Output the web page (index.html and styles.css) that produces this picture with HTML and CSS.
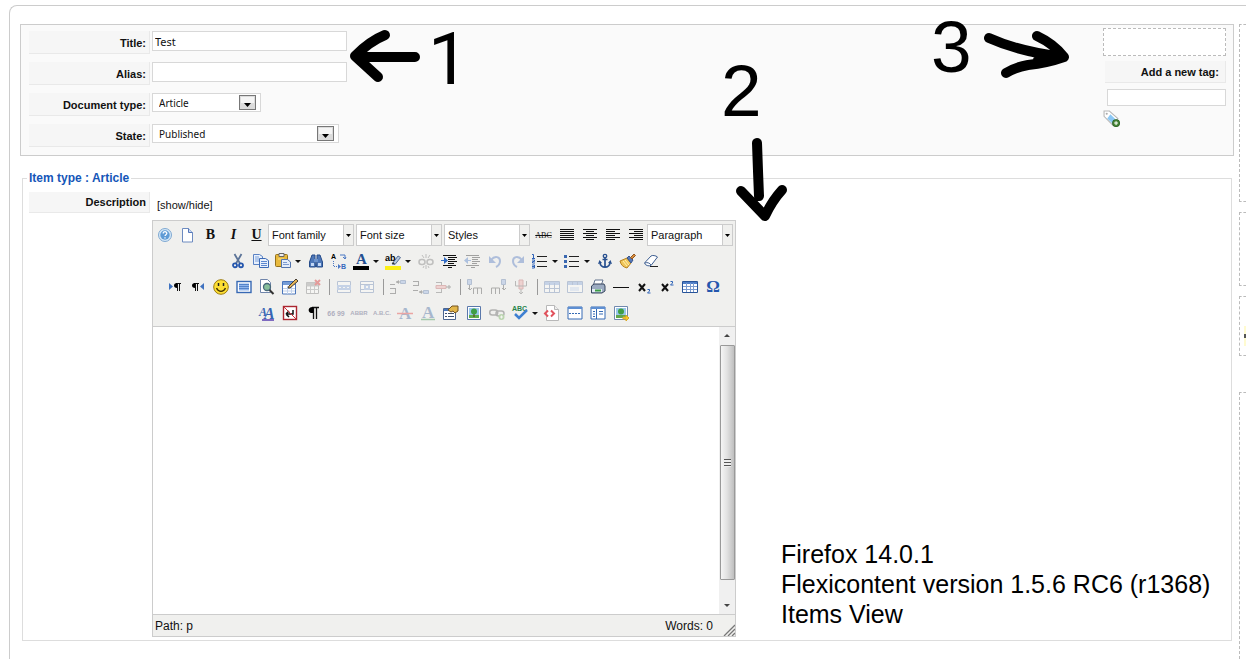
FILE: index.html
```html
<!DOCTYPE html>
<html lang="en">
<head>
    <meta charset="UTF-8">
    <meta name="viewport" content="width=device-width, initial-scale=1.0">
    <title>Edit item</title>
    <link rel="stylesheet" href="styles.css">
</head>
<body>
    <div class="page">
        <main class="main">
            <form class="item-panel">
                <div class="item-fields">
                    <div class="field-row">
                        <label class="field-label" for="title">Title:</label>
                        <input class="text-input" type="text" id="title" value="Test">
                    </div>
                    <div class="field-row">
                        <label class="field-label" for="alias">Alias:</label>
                        <input class="text-input" type="text" id="alias">
                    </div>
                    <div class="field-row">
                        <label class="field-label" for="doctype">Document type:</label>
                        <select class="drop drop-type" id="doctype"><option>Article</option></select>
                    </div>
                    <div class="field-row">
                        <label class="field-label" for="state">State:</label>
                        <select class="drop drop-state" id="state"><option>Published</option></select>
                    </div>
                </div>
                <div class="tags">
                    <div class="tag-list"></div>
                    <label class="field-label tag-label" for="newtag">Add a new tag:</label>
                    <input class="tag-input" type="text" id="newtag">
                    <button class="tag-add" type="button" title="Add tag">
                        <svg viewBox="0 0 16 16"><path d="M1 1h5l8 7-5 6-8-8z" fill="#fff" stroke="#b8b8b8"/><circle cx="3.5" cy="3.5" r="1" fill="#aaa"/><path d="M7 4l5 5-3 4-5-5z" fill="#8cc8f5"/><circle cx="12.300" cy="12.300" r="3.200" fill="#4d8c3c" stroke="#2e6424"/><path d="M10.500 12.300h3.600M12.300 10.500v3.600" stroke="#fff"/></svg>
                    </button>
                </div>
            </form>

            <fieldset class="item-type">
                <legend>Item type : Article</legend>
                <div class="description-row">
                    <label class="field-label" for="description">Description</label>
                    <div class="description">
                        <a class="toggle" href="#">[show/hide]</a>
                        <div class="editor">
                            <div class="toolbar">
                                <div class="tool-row">
                                    <button class="tool" title="Help"><svg viewBox="0 0 16 16"><circle cx="8" cy="8" r="6.500" fill="#d5e7f7" stroke="#7fa9d2"/><circle cx="8" cy="8" r="4.700" fill="#5f9bd6"/><path d="M6.200 6.500c0-2.500 3.800-2.300 3.600 0-.1 1.200-1.800 1.200-1.800 2.500M8 10.200v1.200" fill="none" stroke="#fff" stroke-width="1.300"/></svg></button>
                                    <button class="tool" title="New document"><svg viewBox="0 0 16 16"><path d="M2.500 1.500h6l4 4v9.500h-10z" fill="#fff" stroke="#6d8bc0"/><path d="M8.500 1.500v4h4" fill="#c5d7f2" stroke="#5577b8"/></svg></button>
                                    <button class="tool letter" title="Bold">B</button>
                                    <button class="tool letter italic" title="Italic">I</button>
                                    <button class="tool letter underline" title="Underline">U</button>
                                    <select class="tool-select" aria-label="Font family"><option>Font family</option></select>
                                    <select class="tool-select" aria-label="Font size"><option>Font size</option></select>
                                    <select class="tool-select" aria-label="Styles"><option>Styles</option></select>
                                    <button class="tool strike" title="Strikethrough">ABC</button>
                                    <button class="tool" title="Align full"><svg viewBox="0 0 16 16"><path d="M1 2.500h14M1 4.500h14M1 6.500h14M1 8.500h14M1 10.500h14M1 12.500h14" stroke="#111"/></svg></button>
                                    <button class="tool" title="Align center"><svg viewBox="0 0 16 16"><path d="M1 2.500h14M4 4.500h8M1 6.500h14M4 8.500h8M1 10.500h14M4 12.500h8" stroke="#111"/></svg></button>
                                    <button class="tool" title="Align left"><svg viewBox="0 0 16 16"><path d="M1 2.500h14M1 4.500h9M1 6.500h14M1 8.500h9M1 10.500h14M1 12.500h9" stroke="#111"/></svg></button>
                                    <button class="tool" title="Align right"><svg viewBox="0 0 16 16"><path d="M1 2.500h14M6 4.500h9M1 6.500h14M6 8.500h9M1 10.500h14M6 12.500h9" stroke="#111"/></svg></button>
                                    <select class="tool-select" aria-label="Format"><option>Paragraph</option></select>
                                </div>

                                <div class="tool-row">
                                    <button class="tool" title="Cut"><svg viewBox="0 0 16 16"><path d="M4.500 1l5.500 9.500M11.500 1L6 10.500" stroke="#5c7498" stroke-width="1.800"/><circle cx="5" cy="12.300" r="2" fill="none" stroke="#2456ad" stroke-width="1.800"/><circle cx="11" cy="12.300" r="2" fill="none" stroke="#2456ad" stroke-width="1.800"/></svg></button>
                                    <button class="tool" title="Copy"><svg viewBox="0 0 16 16"><path d="M.5 1.500h6l3 2v8h-9z" fill="#e8f0fc" stroke="#5a82c4"/><path d="M2 4h4M2 6h4M2 8h4" stroke="#7ba0da"/><path d="M6.500 5.500h6l3 2v7h-9z" fill="#e8f0fc" stroke="#3c6ab5"/><path d="M8 8.500h6M8 10.500h6M8 12.500h6" stroke="#5b87cf"/></svg></button>
                                    <button class="tool split" title="Paste"><svg viewBox="0 0 16 16"><rect x=".5" y="1.500" width="12" height="12" rx="1" fill="#e8b93c" stroke="#93701c"/><path d="M4 .5h5v3H4z" fill="#eee" stroke="#666"/><path d="M3 6h6" stroke="#fbe28b"/><path d="M6.500 6.500h6l3 2.500v5.500h-9z" fill="#e4edfb" stroke="#5475ad"/><path d="M8 9.500h4M8 11.500h6" stroke="#7d9bd0"/></svg></button>
                                    <button class="tool" title="Find"><svg viewBox="0 0 16 16"><path d="M4 2h3v3l.5 9H1.500V9zM9 2h3l2.500 7v5h-6L9 5z" fill="#4d77b8" stroke="#264c8a"/><path d="M6 6h4v3H6z" fill="#6d94ce"/><path d="M3 10h3v3H3zM10 10h3v3h-3z" fill="#c2d7f5"/></svg></button>
                                    <button class="tool" title="Find/Replace"><svg viewBox="0 0 16 16"><text class="mini" x="0" y="6">A</text><text class="mini blue" x="10" y="16">B</text><path d="M9 2h5v4M12 4l2 2 1-2" fill="none" stroke="#4a78c4"/><path d="M2.500 8v5.500H7" fill="none" stroke="#4a78c4" stroke-dasharray="1 1"/><path d="M7 11l3 2.500L7 16z" fill="#4a78c4"/></svg></button>
                                    <button class="tool split" title="Text color"><svg viewBox="0 0 16 16"><text class="color-a" x="3" y="11">A</text><path d="M0 13h16v4H0z"/></svg></button>
                                    <button class="tool split" title="Background color"><svg viewBox="0 0 16 16"><path d="M0 13h16v4H0z" fill="#fbee16"/><path d="M7 11l6-8 2.500 1.500L10 11.500z" fill="#b6c8e0" stroke="#586f95"/><path d="M7 11l1-2 2 2z" fill="#333"/><text class="mini ab" x="0" y="8">ab</text></svg></button>
                                    <button class="tool" title="Unlink" disabled><svg viewBox="0 0 16 16"><rect x="1" y="6.500" width="6" height="5" rx="2.500" fill="none" stroke="#666" stroke-width="1.500"/><rect x="9" y="6.500" width="6" height="5" rx="2.500" fill="none" stroke="#666" stroke-width="1.500"/><path d="M8 1v4M4 2l2 3M12 2l-2 3M8 12v4M5 15l1-2M11 15l-1-2" stroke="#666"/></svg></button>
                                    <button class="tool" title="Indent"><svg viewBox="0 0 16 16"><path d="M2 2.500h13M7 4.500h9M7 6.500h7M7 8.500h9M7 10.500h6M2 12.500h13M7 14.500h4" stroke="#111"/><path d="M0 7h3V4l4 3.500L3 11V8H0z" fill="#326bc4"/></svg></button>
                                    <button class="tool" title="Outdent" disabled><svg viewBox="0 0 16 16"><path d="M2 2.500h13M8 4.500h8M8 6.500h6M8 8.500h8M8 10.500h5M2 12.500h13M7 14.500h4" stroke="#111"/><path d="M7 7H4V4L0 7.500 4 11V8h3z" fill="#326bc4"/></svg></button>
                                    <button class="tool" title="Undo" disabled><svg viewBox="0 0 16 16"><path d="M4 7c4-5 9-3 9 1 0 3-2 5-4 6" fill="none" stroke="#3663b8" stroke-width="2"/><path d="M2 3v7h7z" fill="#3663b8"/></svg></button>
                                    <button class="tool" title="Redo" disabled><svg viewBox="0 0 16 16"><path d="M12 7C8 2 3 4 3 8c0 3 2 5 4 6" fill="none" stroke="#3663b8" stroke-width="2"/><path d="M14 3v7H7z" fill="#3663b8"/></svg></button>
                                    <button class="tool split" title="Numbered list"><svg viewBox="0 0 16 16"><path d="M5 3.500h10M5 8.500h10M5 13.500h10" stroke="#222"/><path d="M0 1.500h1.500V5M0 5.500h3M0 7h2.500v1.500H.5V10H3M0 12h2.500v3H0M0 13.500h2" fill="none" stroke="#2e62b8"/></svg></button>
                                    <button class="tool split" title="Bulleted list"><svg viewBox="0 0 16 16"><path d="M5 3.500h10M5 8.500h10M5 13.500h10" stroke="#222"/><path d="M0 2h3v3H0zM0 7h3v3H0zM0 12h3v3H0z" fill="#3a68b0"/></svg></button>
                                    <button class="tool" title="Anchor"><svg viewBox="0 0 16 16"><circle cx="8" cy="3" r="1.700" fill="none" stroke="#28508f" stroke-width="1.300"/><path d="M8 5v9M5.500 6.500h5M3 9c0 7 10 7 10 0" fill="none" stroke="#28508f" stroke-width="1.700"/><path d="M1 11l1.500-4 2.500 3zM15 11l-1.500-4-2.500 3z" fill="#28508f"/></svg></button>
                                    <button class="tool" title="Cleanup"><svg viewBox="0 0 16 16"><path d="M0 8l7-3 4 5-4 5c-4-1-6-3-7-7z" fill="#f0c65a" stroke="#b6811f"/><path d="M3 8l4 5M5 7l4 5" stroke="#fff0ad"/><path d="M7 5l2-2 4 4-2 3z" fill="#5679b8" stroke="#3a568c"/><path d="M10.500 4.500L14 1l1.500 1.500L12 6z" fill="#d78d3c" stroke="#945720"/></svg></button>
                                    <button class="tool" title="Remove formatting"><svg viewBox="0 0 16 16"><path d="M1.500 10L8 3c1-1 5-.5 6.500 1L8 12.500c-2 1-6 0-6.500-2.500z" fill="#fff" stroke="#3d5e91"/><path d="M2 10c2-1 5 0 6 2" fill="none" stroke="#3d5e91"/><path d="M7 13.500h8" stroke="#222"/></svg></button>
                                </div>

                                <div class="tool-row">
                                    <button class="tool" title="Left to right"><svg viewBox="0 0 16 16"><path d="M2 4l4 3.500L2 11z" fill="#3f72bf"/><path d="M10.500 4v8M12.500 4v8M9 4.500h5" stroke="#111"/><path d="M10 4c-4 0-4 5 0 5z"/></svg></button>
                                    <button class="tool" title="Right to left"><svg viewBox="0 0 16 16"><path d="M14 4l-4 3.500 4 3.500z" fill="#3f72bf"/><path d="M5.500 4v8M7.500 4v8M4 4.500h5" stroke="#111"/><path d="M5 4C1 4 1 9 5 9z"/></svg></button>
                                    <button class="tool" title="Emotions"><svg viewBox="0 0 16 16"><circle cx="8" cy="8" r="7.300" fill="#fddf33" stroke="#9d7c0e"/><path d="M5.500 4v3M10.500 4v3" stroke="#222" stroke-width="1.500"/><path d="M3.500 9c2 4.500 7 4.500 9 0" fill="none" stroke="#433300" stroke-width="1.300"/></svg></button>
                                    <button class="tool" title="Fullscreen"><svg viewBox="0 0 16 16"><rect x="1" y="2.500" width="14" height="11" fill="#fff" stroke="#3769b4" stroke-width="1.400"/><path d="M3 4.500h10v7H3z" fill="#8fb4eb"/><path d="M3 5.500h10M3 7.500h10M3 9.500h10" stroke="#5383ca"/></svg></button>
                                    <button class="tool" title="Preview"><svg viewBox="0 0 16 16"><path d="M1.500.5h7l3 3v10h-10z" fill="#fff" stroke="#7085aa"/><circle cx="8" cy="8" r="3.500" fill="#87bf9b" stroke="#49697b" stroke-width="1.300"/><path d="M10.500 11l4 4" stroke="#333" stroke-width="2"/></svg></button>
                                    <button class="tool" title="Edit table"><svg viewBox="0 0 16 16"><path d="M.5 2.500h13V15H.5z" fill="#fff" stroke="#4b76bb"/><path d="M1 3h12v3H1z" fill="#759cd6"/><path d="M1 9.500h12M1 12h12M5.500 7v8M9.500 7v8" stroke="#c0d1eb"/><path d="M6 9l1-2 7-7 2 2-8 7z" fill="#e5b657" stroke="#493e31"/></svg></button>
                                    <button class="tool" title="Delete table" disabled><svg viewBox="0 0 16 16"><path d="M1.500 3.500h12v11h-12z" fill="#fff" stroke="#666"/><path d="M2 4h11v3H2zM2 10.500h12M5.500 7v7M9.500 7v7" fill="#888" stroke="#888"/><path d="M10 1l5 5M15 1l-5 5" stroke="#d20000" stroke-width="2"/></svg></button>
                                    <span class="separator"></span>
                                    <button class="tool" title="Row properties" disabled><svg viewBox="0 0 16 16"><path d="M1.500 2.500h13v11h-13z" fill="#fff" stroke="#5674a8"/><path d="M1 6h14v5H1z" fill="#779dda"/><path d="M3 8.500h2M7 8.500h2M11 8.500h2" stroke="#fff"/></svg></button>
                                    <button class="tool" title="Cell properties" disabled><svg viewBox="0 0 16 16"><path d="M1.500 2.500h13v11h-13zM1 5.500h14M1 10.500h14" fill="#fff" stroke="#5674a8"/><path d="M5 6h6v5H5z" fill="#779dda"/><path d="M7 7l2 2m0-2L7 9" stroke="#fff"/></svg></button>
                                    <span class="separator"></span>
                                    <button class="tool" title="Insert row before" disabled><svg viewBox="0 0 16 16"><path d="M0 5.500h5M0 9.500h6M0 14.500h6M5.500 10v4M6 3h5" stroke="#333"/><path d="M10.500 1.500h5v3h-5z" fill="#88a7dd" stroke="#47689f"/><path d="M9 1L6 3l3 2z" fill="#333"/></svg></button>
                                    <button class="tool" title="Insert row after" disabled><svg viewBox="0 0 16 16"><path d="M0 2.500h6M0 6.500h6M5.500 3v4M0 11.500h5M6 13h5" stroke="#333"/><path d="M10.500 11.500h5v3h-5z" fill="#88a7dd" stroke="#47689f"/><path d="M9 11l-3 2 3 2z" fill="#333"/></svg></button>
                                    <button class="tool" title="Delete row" disabled><svg viewBox="0 0 16 16"><path d="M0 3.500h6M0 13.500h6M5.500 4v9" stroke="#555"/><path d="M0 6.500h10v3H0z" fill="#ed9b9b" stroke="#b65050"/><path d="M10 8h5M13 6v4" stroke="#333"/></svg></button>
                                    <span class="separator"></span>
                                    <button class="tool" title="Insert column before" disabled><svg viewBox="0 0 16 16"><path d="M.5.500h4v5h-4z" fill="#88a7dd" stroke="#47689f"/><path d="M2.500 6v5M1 9l2 2 2-2M6.500 15V9h8v6M10.500 9v6" fill="none" stroke="#333"/></svg></button>
                                    <button class="tool" title="Insert column after" disabled><svg viewBox="0 0 16 16"><path d="M11.500.500h4v5h-4z" fill="#88a7dd" stroke="#47689f"/><path d="M13.500 6v5M12 9l2 2 2-2M1.500 15V9h8v6M5.500 9v6" fill="none" stroke="#333"/></svg></button>
                                    <button class="tool" title="Delete column" disabled><svg viewBox="0 0 16 16"><path d="M6 1h4v9H6z" fill="#ed9b9b" stroke="#b65050"/><path d="M2.500 2v5h11V2M8 10v5M6 13l2 2 2-2" fill="none" stroke="#555"/></svg></button>
                                    <span class="separator"></span>
                                    <button class="tool" title="Split cells" disabled><svg viewBox="0 0 16 16"><path d="M.5 2.500h15v11H.5z" fill="#fff" stroke="#5674a8"/><path d="M1 3h14v3H1z" fill="#779dda"/><path d="M1 9.500h14M5.500 4v9M10.500 4v9" stroke="#5674a8"/></svg></button>
                                    <button class="tool" title="Merge cells" disabled><svg viewBox="0 0 16 16"><path d="M.5 2.500h15v11H.5z" fill="#fff" stroke="#5674a8"/><path d="M1 3h14v3H1z" fill="#779dda"/><path d="M3 8h9v4H3z" fill="#c6d7f2"/><path d="M5.500 3v3M10.500 3v3" stroke="#5674a8"/></svg></button>
                                    <button class="tool" title="Print"><svg viewBox="0 0 16 16"><path d="M5 1h8l-2 6H3z" fill="#fff" stroke="#65758f"/><path d="M1.500 7L4 5h10l1 2v5l-3 2H1.500z" fill="#9cabc1" stroke="#39475f"/><path d="M2 10h10v3H2z" fill="#e5edf6"/><path d="M5 11.500h6" stroke="#3a9d45" stroke-width="2"/></svg></button>
                                    <button class="tool" title="Horizontal rule"><svg viewBox="0 0 16 16"><path d="M0 8.500h16" stroke="#111"/></svg></button>
                                    <button class="tool" title="Subscript"><svg viewBox="0 0 16 16"><path d="M3 5l6 7M9 5l-6 7" stroke="#111" stroke-width="2"/><path d="M11.500 10.500h2v1.500l-2 2h3" fill="none" stroke="#2c62b7"/></svg></button>
                                    <button class="tool" title="Superscript"><svg viewBox="0 0 16 16"><path d="M3 5l6 7M9 5l-6 7" stroke="#111" stroke-width="2"/><path d="M11.500 2.500h2V4l-2 2h3" fill="none" stroke="#2c62b7"/></svg></button>
                                    <button class="tool" title="Insert table"><svg viewBox="0 0 16 16"><path d="M.5 2.500h15v11H.5z" fill="#fff" stroke="#285499"/><path d="M1 3h14v2H1z" fill="#4d7dc6"/><path d="M1 7.500h14M1 10.500h14M4.500 4v9M8.500 4v9M11.500 4v9" stroke="#7b9bcf"/></svg></button>
                                    <button class="tool omega" title="Special character">Ω</button>
                                </div>

                                <div class="tool-row">
                                    <button class="tool" title="Edit CSS style"><svg viewBox="0 0 16 16"><text class="style-a" x="0" y="11">A</text><text class="style-a big" x="5" y="14">A</text><path d="M3 15h12" stroke="#5a3fb0" stroke-width="1.500"/></svg></button>
                                    <button class="tool" title="Visual control characters"><svg viewBox="0 0 16 16"><rect x="1.500" y="1.500" width="13" height="13" fill="#fff" stroke="#ab2630" stroke-width="1.400"/><path d="M4 9h7V5M4 9l3-3M4 9l3 3" fill="none" stroke="#111" stroke-width="1.500"/><path d="M2 2l12 12" stroke="#d12d36"/></svg></button>
                                    <button class="tool" title="Show invisible characters"><svg viewBox="0 0 16 16"><path d="M8.500 2v12M11.500 2v12M7 2.500h7" stroke="#111" stroke-width="1.300"/><path d="M8.500 2C2 1 2 9 8.500 8z"/></svg></button>
                                    <button class="tool quote marks" title="Citation" disabled>66 99</button>
                                    <button class="tool quote" title="Abbreviation" disabled>ABBR</button>
                                    <button class="tool quote" title="Acronym" disabled>A.B.C.</button>
                                    <button class="tool" title="Deletion" disabled><svg viewBox="0 0 16 16"><text class="mark-a" x="2" y="14">A</text><path d="M0 8.500h16" stroke="#e21b1b" stroke-width="1.500"/></svg></button>
                                    <button class="tool" title="Insertion" disabled><svg viewBox="0 0 16 16"><text class="mark-a" x="2" y="13">A</text><path d="M1 14.500h14" stroke="#188332" stroke-width="1.500"/></svg></button>
                                    <button class="tool" title="Attributes"><svg viewBox="0 0 16 16"><path d="M.5 3.500h12v11H.5z" fill="#fff" stroke="#4c6691"/><path d="M1 4h8v2H1z" fill="#4775bc"/><path d="M2 8.500h2M2 11.500h2M5 8.500h6M5 11.500h6" stroke="#3d4f6b"/><path d="M5 5l4-4h6v5l-3 2-2-2-2 1z" fill="#e2b64a" stroke="#73531e"/></svg></button>
                                    <button class="tool" title="Media"><svg viewBox="0 0 16 16"><path d="M1.500 1.500h13v13h-13z" fill="#fff" stroke="#5a78ab"/><path d="M3 3h10v10H3z" fill="#9ac8eb"/><path d="M3 10h10v3H3z" fill="#5fae4c"/><path d="M8 7v5" stroke="#624b24" stroke-width="1.300"/><circle cx="8" cy="6.500" r="3" fill="#3f9e45"/></svg></button>
                                    <button class="tool" title="Link" disabled><svg viewBox="0 0 16 16"><rect x="0.700" y="5" width="8" height="5" rx="2.500" fill="none" stroke="#444" stroke-width="1.500"/><rect x="7" y="6" width="8" height="5" rx="2.500" fill="none" stroke="#444" stroke-width="1.500"/><circle cx="12.500" cy="12" r="3" fill="#5ba53f"/><path d="M11 12h3M12.500 10.500v3" stroke="#fff"/></svg></button>
                                    <button class="tool split" title="Spellcheck"><svg viewBox="0 0 16 16"><text class="mini green" x="0" y="6">ABC</text><path d="M3 9l4 4 8-8" fill="none" stroke="#3f80d2" stroke-width="2.500"/></svg></button>
                                    <button class="tool" title="Source"><svg viewBox="0 0 16 16"><path d="M2.500.5h8l4 4v11h-12z" fill="#fff" stroke="#b8b8b8"/><path d="M10.500.5v4h4" fill="#eee" stroke="#b8b8b8"/><path d="M4 5.500L1 8.500l3 3M7 5.500l3 3-3 3" fill="none" stroke="#e2525c" stroke-width="2"/></svg></button>
                                    <button class="tool" title="Page break"><svg viewBox="0 0 16 16"><path d="M1 2h14v12H1z" fill="#fff" stroke="#366bb5"/><path d="M1 3h14" stroke="#5e8fd2" stroke-width="2"/><path d="M2 8.500h12" stroke="#366bb5" stroke-dasharray="2 1"/></svg></button>
                                    <button class="tool" title="Columns"><svg viewBox="0 0 16 16"><path d="M1 2h14v12H1z" fill="#fff" stroke="#366bb5"/><path d="M1 3h14" stroke="#5e8fd2" stroke-width="2"/><path d="M6.500 4v10M3 6.500h2M3 9h2M3 11.500h2M9 6.500h4M9 9h4" stroke="#366bb5"/></svg></button>
                                    <button class="tool" title="Insert image"><svg viewBox="0 0 16 16"><path d="M1.500 1.500h13v13h-13z" fill="#fff" stroke="#7189ae"/><path d="M3 3h10v10H3z" fill="#9ac8eb"/><path d="M3 10h10v3H3z" fill="#61a64b"/><circle cx="8" cy="6.500" r="3" fill="#3f9e45"/><path d="M10 12h3v-2l3 3-3 3v-2h-3z" fill="#f5c928" stroke="#d9a928"/></svg></button>
                                </div>
                            </div>

                            <div class="edit-area">
                                <textarea id="description"></textarea>
                                <div class="scrollbar">
                                    <span class="scroll-arrow up"></span>
                                    <span class="scroll-thumb"><span class="grip"></span></span>
                                    <span class="scroll-arrow"></span>
                                </div>
                            </div>

                            <div class="status-bar">
                                <span>Path: p</span>
                                <span class="words">Words: 0</span>
                                <svg class="resizer" viewBox="0 0 12 12"><path d="M1 12L12 1M5 12l7-7M9 12l3-3" stroke="#777" stroke-width="1.300"/></svg>
                            </div>
                        </div>
                    </div>
                </div>
            </fieldset>
        </main>

        <aside class="side">
            <div class="side-box box-details"></div>
            <div class="side-box box-dates"></div>
            <div class="side-box box-required"><span class="required"></span></div>
            <div class="side-box box-params"></div>
        </aside>
    </div>

    <!-- callouts drawn over the form -->
    <svg class="callout callout-one" viewBox="0 0 130 80">
        <path d="M75 37H16M45 15Q30 21 15 36L38 57"/>
        <text x="88" y="64">1</text>
    </svg>
    <svg class="callout callout-two" viewBox="0 0 80 170">
        <path d="M37 93l1 28 1 25M21 141l24 25M62 140q-10 11-17 26"/>
        <text x="1" y="66">2</text>
    </svg>
    <svg class="callout callout-three" viewBox="0 0 150 80">
        <path d="M59 28Q90 42 134 47M107 26q17 8 27 21-17 6-36 8-12 2-22 8M108 50l24-3"/>
        <text x="1" y="62">3</text>
    </svg>
    <div class="note">
        <p>Firefox 14.0.1</p>
        <p>Flexicontent version 1.5.6 RC6 (r1368)</p>
        <p>Items View</p>
    </div>
</body>
</html>
```
FILE: styles.css
```css
:root {
    --line: #ccc;
    --field-line: #d8d8d8;
    --sans: "Liberation Sans", Arial, sans-serif;
    --ui: "Noto Sans", Tahoma, sans-serif;
}

* {
    box-sizing: border-box;
}

body {
    margin: 0;
    background: #fff;
    color: #111;
    font-family: var(--sans);
    font-size: 11px;
    overflow: hidden;
}

input, select, textarea, button {
    margin: 0;
    color: #111;
    font-family: var(--ui);
    font-size: 10px;
}

.page {
    display: flex;
    gap: 5px;
    min-height: 100vh;
    margin: 5px 0 0 9px;
    padding: 18px 0 0 10px;
    border: solid var(--line);
    border-width: 1px 0 0 1px;
    border-radius: 8px 0 0 0;
}

.main {
    flex: 1;
    min-width: 0;
}

/* item panel */
.item-panel {
    display: flex;
    justify-content: space-between;
    border: 1px solid var(--line);
    background: #fafafa;
}

.item-fields {
    padding: 6px 0 0 8px;
}

.field-row {
    display: flex;
    align-items: flex-start;
    gap: 2px;
    height: 31px;
}

.field-label {
    flex: none;
    width: 121px;
    height: 23px;
    padding-right: 3px;
    border: solid #e9e9e9;
    border-width: 0 1px 1px 0;
    background: #f6f6f6;
    font-weight: bold;
    line-height: 24px;
    text-align: right;
}

.text-input, .tag-input {
    border: 1px solid var(--field-line);
    background: #fff;
}

.text-input {
    width: 195px;
    height: 20px;
    padding: 0 2px;
    font-size: 11px;
}

.drop {
    height: 19px;
    padding: 0 6px;
    border: 1px solid var(--field-line);
    border-radius: 0;
    appearance: none;
    background: #fff url("data:image/svg+xml,%3Csvg xmlns='http://www.w3.org/2000/svg' width='17' height='15'%3E%3Crect x='.5' y='.5' width='16' height='14' fill='%23dcdcdc' stroke='%23777'/%3E%3Crect x='2' y='2' width='13' height='6' fill='%23f5f5f5'/%3E%3Cpath d='M5 8h7l-3.500 4z'/%3E%3C/svg%3E") no-repeat right 4px center;
}

.drop-type {
    width: 109px;
}

.drop-state {
    width: 187px;
}

/* tags */
.tags {
    display: flex;
    flex-direction: column;
    align-items: flex-end;
    width: 123px;
    margin: 3px 7px 0 0;
}

.tag-list {
    width: 100%;
    height: 28px;
    margin-bottom: 5px;
    border: 1px dashed #bbb;
    background: #fff;
}

.tag-label {
    height: 22px;
    margin-bottom: 6px;
    padding-right: 6px;
    line-height: 23px;
}

.tag-input {
    width: 119px;
    height: 17px;
}

.tag-add {
    align-self: flex-start;
    width: 17px;
    height: 17px;
    margin-top: 4px;
    padding: 0;
    border: 0;
    background: none;
}

.tag-add svg {
    display: block;
}

/* item type */
.item-type {
    margin: 15px 2px 0;
    padding: 7px 6px 3px;
    border: 1px solid #ddd;
}

.item-type legend {
    margin-left: -2px;
    padding: 0 2px;
    color: #1556b8;
    font-size: 12px;
    font-weight: bold;
    line-height: 14px;
}

.description-row {
    display: flex;
    gap: 2px;
}

.description-row .field-label {
    height: 21px;
    line-height: 21px;
}

.toggle {
    display: block;
    height: 28px;
    padding: 6px 0 0 5px;
    color: #111;
    line-height: 14px;
    text-decoration: none;
}

/* editor */
.editor {
    width: 584px;
    border: 1px solid var(--line);
}

.toolbar {
    padding-top: 1px;
    border-bottom: 1px solid var(--line);
    background: #f0f0ee;
}

.tool-row {
    display: flex;
    align-items: center;
    justify-content: center;
    height: 26px;
}

.tool {
    display: flex;
    flex: none;
    align-items: center;
    justify-content: center;
    width: 23px;
    height: 22px;
    padding: 0;
    border: 0;
    background: none;
}

.tool svg {
    flex: none;
    width: 16px;
    height: 16px;
    overflow: visible;
}

.tool:disabled {
    color: #336;
    opacity: 0.35;
}

.split {
    justify-content: flex-start;
    width: 32px;
    padding-left: 3px;
}

.split::after {
    content: "";
    margin-left: 4px;
    border: solid transparent;
    border-width: 3px 3px 0;
    border-top-color: #111;
}

.letter {
    font-family: "Liberation Serif", "Times New Roman", serif;
    font-size: 14px;
    font-weight: bold;
}

.italic {
    font-style: italic;
}

.underline {
    text-decoration: underline;
}

.strike {
    font-family: "Liberation Serif", "Times New Roman", serif;
    font-size: 8px;
    text-decoration: line-through;
}

.quote {
    font-family: var(--sans);
    font-size: 6px;
    font-weight: bold;
    white-space: nowrap;
}

.quote.marks {
    font-size: 7px;
}

.omega {
    color: #2456ad;
    font-family: "Liberation Serif", serif;
    font-size: 17px;
    font-weight: bold;
}

.mini {
    font: bold 7px var(--sans);
}

.mini.blue {
    fill: #3569bd;
}

.mini.ab {
    font-size: 9px;
}

.mini.green {
    fill: #27844b;
}

.color-a, .mark-a {
    fill: #234f91;
    font: bold 15px "Liberation Serif", serif;
}

.mark-a {
    font-size: 17px;
}

.style-a {
    fill: #3765b4;
    font: italic bold 12px "Liberation Serif", serif;
}

.style-a.big {
    font-size: 16px;
}

.separator {
    width: 1px;
    height: 16px;
    margin: 0 3px 0 4px;
    background: #999;
}

.tool-select {
    flex: none;
    width: 86px;
    height: 22px;
    margin-right: 2px;
    padding: 0 3px;
    border: 1px solid var(--line);
    border-radius: 0;
    appearance: none;
    background: #fff url("data:image/svg+xml,%3Csvg xmlns='http://www.w3.org/2000/svg' width='10' height='20'%3E%3Cpath fill='%23f0f0ee' d='M0 0h10v20H0z'/%3E%3Cpath fill='%23ccc' d='M0 0h1v20H0z'/%3E%3Cpath d='M3 9h5L5.500 12z'/%3E%3C/svg%3E") no-repeat right center;
    font-family: var(--sans);
    font-size: 11px;
}

.edit-area {
    display: flex;
    height: 287px;
}

.edit-area textarea {
    flex: 1;
    padding: 8px;
    border: 0;
    outline: 0;
    resize: none;
}

.scrollbar {
    display: flex;
    flex-direction: column;
    align-items: center;
    width: 16px;
    padding-bottom: 7px;
    background: #f0f0f0;
}

.scroll-arrow {
    margin-top: auto;
    border: solid transparent;
    border-width: 3px 3px 0;
    border-top-color: #444;
}

.scroll-arrow.up {
    margin: 7px 0 8px;
    border-width: 0 3px 3px;
    border-bottom-color: #444;
}

.scroll-thumb {
    display: flex;
    align-items: center;
    justify-content: center;
    width: 15px;
    height: 235px;
    border: 1px solid #999;
    border-radius: 1px;
    background: linear-gradient(to right, #f5f5f5, #e2e2e2 45%, #bfbfbf);
}

.grip {
    width: 7px;
    height: 8px;
    background: repeating-linear-gradient(#555 0 1px, #eee 1px 3px);
}

.status-bar {
    display: flex;
    align-items: center;
    height: 22px;
    padding-left: 2px;
    border-top: 1px solid var(--line);
    background: #f0f0ee;
    font-size: 12px;
}

.words {
    margin-left: auto;
}

.resizer {
    align-self: flex-end;
    width: 12px;
    height: 12px;
    margin-left: 10px;
}

/* side column, runs off the window */
.side {
    display: flex;
    flex: none;
    flex-direction: column;
    gap: 10px;
    width: 7px;
}

.side-box {
    border: 1px dashed #bbb;
    border-right: 0;
}

.box-details {
    height: 178px;
}

.box-dates {
    height: 74px;
}

.box-required {
    display: flex;
    align-items: center;
    justify-content: flex-end;
    height: 60px;
    margin-bottom: 26px;
    padding-top: 20px;
}

.required {
    width: 2px;
    height: 20px;
    border: solid #fffbd0;
    border-width: 8px 0;
    background: #555;
}

.box-params {
    flex: 1;
    border-bottom: 0;
}

/* callouts */
.callout {
    position: absolute;
    overflow: visible;
    pointer-events: none;
}

.callout path {
    fill: none;
    stroke: #000;
    stroke-width: 10px;
    stroke-linecap: round;
    stroke-linejoin: round;
}

.callout text {
    font: 73px var(--sans);
}

.callout-one {
    top: 20px;
    left: 340px;
    width: 130px;
}

.callout-one text {
    font-family: Roboto, sans-serif;
}

.callout-two {
    top: 50px;
    left: 720px;
    width: 80px;
}

.callout-three {
    top: 10px;
    left: 930px;
    width: 150px;
}

.note {
    position: absolute;
    top: 539px;
    left: 781px;
    color: #000;
    font-size: 25px;
    line-height: 30px;
}

.note p {
    margin: 0;
}
```
